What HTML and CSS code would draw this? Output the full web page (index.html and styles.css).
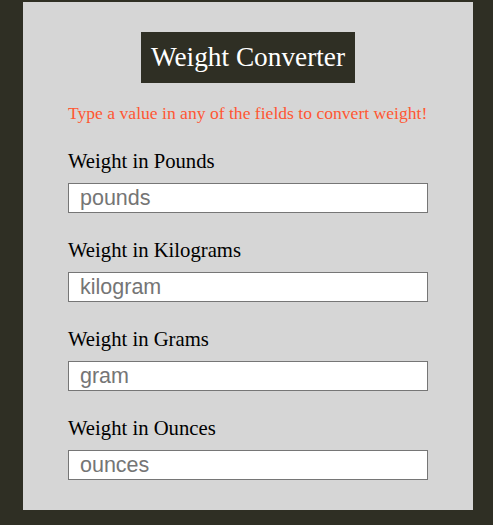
FILE: index.html
```html
<!DOCTYPE html>
<html lang="en">
<head>
<meta charset="utf-8">
<title>Weight Converter</title>
<link rel="stylesheet" href="styles.css">
</head>
<body>
<div class="panel">
  <div class="title-wrap"><h1 class="title">Weight Converter</h1></div>
  <p class="hint">Type a value in any of the fields to convert weight!</p>
  <div class="group">
    <label class="label" for="lbs">Weight in Pounds</label>
    <input class="field" id="lbs" type="number" placeholder="pounds">
  </div>
  <div class="group">
    <label class="label" for="kg">Weight in Kilograms</label>
    <input class="field" id="kg" type="number" placeholder="kilogram">
  </div>
  <div class="group">
    <label class="label" for="g">Weight in Grams</label>
    <input class="field" id="g" type="number" placeholder="gram">
  </div>
  <div class="group">
    <label class="label" for="oz">Weight in Ounces</label>
    <input class="field" id="oz" type="number" placeholder="ounces">
  </div>
</div>
</body>
</html>
```
FILE: styles.css
```css
html, body {
  margin: 0;
  padding: 0;
  background: #2f2f24;
  font-family: "Liberation Serif", "Times New Roman", serif;
}
.panel {
  width: 450px;
  box-sizing: border-box;
  margin: 2px 0 0 23px;
  padding: 30px 45px 30px 45px;
  background: #d6d6d6;
}
.title-wrap {
  display: flex;
  justify-content: center;
}
.title {
  margin: 0;
  padding: 10px;
  background: #2f2f24;
  color: #ffffff;
  font-size: 27.3px;
  font-weight: normal;
  line-height: 31px;
}
.hint {
  margin: 21px 0 0 0;
  color: #ff5733;
  font-size: 17.6px;
  line-height: 19px;
}
.group {
  display: flex;
  flex-direction: column;
  align-items: flex-start;
  margin-top: 26px;
}
.hint + .group {
  margin-top: 27px;
}
.label {
  font-size: 20.7px;
  line-height: 23px;
  color: #000;
}
.field {
  margin-top: 10px;
  box-sizing: border-box;
  width: 360px;
  height: 30px;
  padding: 0 11px;
  border: 1px solid #767676;
  background: #fff;
  font-family: "Liberation Sans", Arial, sans-serif;
  font-size: 21.5px;
  color: #000;
  -moz-appearance: textfield;
  appearance: textfield;
}
.field::-webkit-outer-spin-button,
.field::-webkit-inner-spin-button {
  -webkit-appearance: none;
  margin: 0;
}
.field::placeholder {
  color: #757575;
}
```
